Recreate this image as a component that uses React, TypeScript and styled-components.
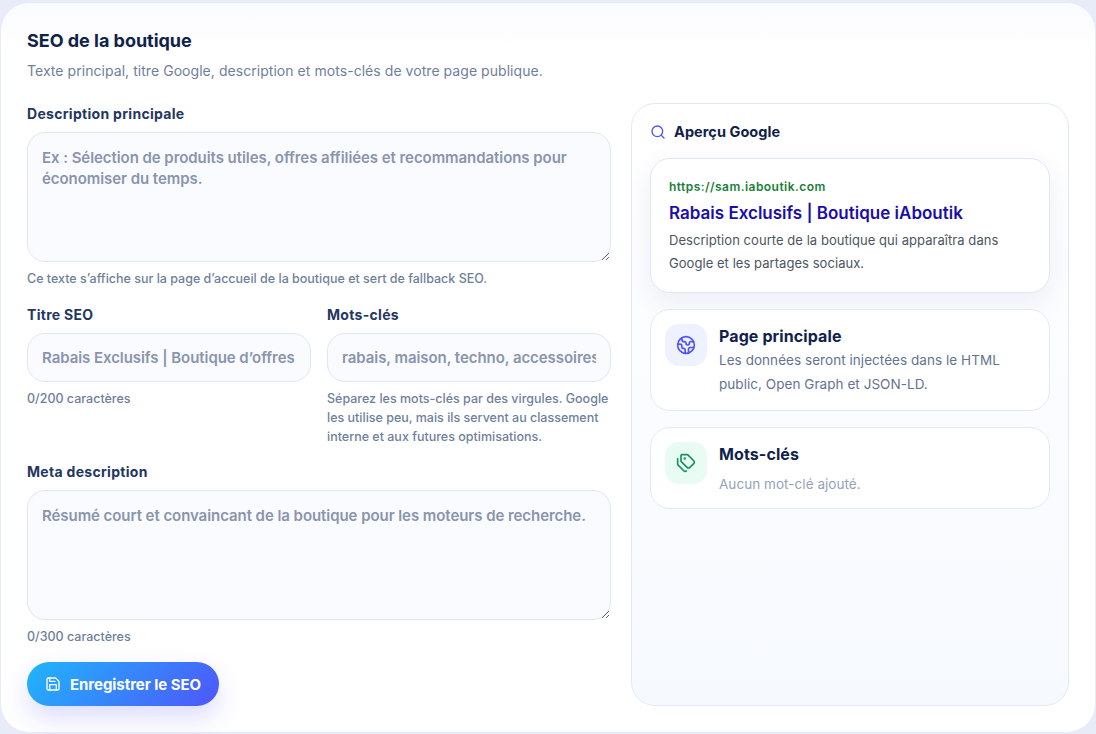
import React from "react";
import styled, { createGlobalStyle } from "styled-components";
import { Earth, Save, Search, Tags } from "lucide-react";

const GlobalStyle = createGlobalStyle`
  * { box-sizing: border-box; }
  html, body { margin: 0; height: 100%; }
  body {
    background: #e8ebf8;
    font-family: Inter, "Noto Sans", "Liberation Sans", sans-serif;
    color: #10224a;
    overflow: hidden;
  }
`;

const Page = styled.div`
  width: 1096px;
  height: 734px;
  padding: 2px 1px;
`;

const Card = styled.section`
  height: 730px;
  padding: 24px 26px 26px;
  background: linear-gradient(180deg, #fafbfe 0, #ffffff 50px);
  border-radius: 28px;
  border-top: 1px solid #e3e9f6;
`;

const Title = styled.h2`
  margin: 0;
  font-size: 18px;
  line-height: 28px;
  font-weight: 700;
  letter-spacing: -0.02px;
  color: #10224a;
`;

const Subtitle = styled.p`
  margin: 6px 0 0;
  font-size: 14px;
  line-height: 20px;
  letter-spacing: 0.05px;
  color: #6f7f9b;
`;

const Columns = styled.div`
  display: grid;
  grid-template-columns: 4fr 3fr;
  gap: 20px;
  margin-top: 22px;
`;

const FormColumn = styled.div`
  display: flex;
  flex-direction: column;
`;

const Field = styled.div`
  display: flex;
  flex-direction: column;
  min-width: 0;
`;

const FieldRow = styled.div`
  display: grid;
  grid-template-columns: 1fr 1fr;
  gap: 16px;
  margin: 16px 0 15px;
`;

const Label = styled.label`
  font-size: 14px;
  line-height: 22px;
  font-weight: 700;
  letter-spacing: 0.3px;
  color: #24375f;
  margin-bottom: 7px;
`;

const controlStyles = `
  width: 100%;
  font-family: inherit;
  font-size: 15px;
  font-weight: 600;
  letter-spacing: -0.06px;
  color: #10224a;
  background: #f9fbff;
  border: 1px solid #dde6f5;
  border-radius: 18px;
  outline: none;
  padding: 14px;
  &::placeholder { color: #8a94ac; opacity: 1; }
`;

const TextArea = styled.textarea`
  ${controlStyles}
  display: block;
  height: 130px;
  line-height: 21px;
  resize: vertical;
`;

const Input = styled.input`
  ${controlStyles}
  display: block;
  height: 49px;
`;

const Hint = styled.small`
  margin-top: 7px;
  font-size: 12.5px;
  line-height: 19px;
  font-weight: 500;
  color: #6f7f9b;
`;

const SaveButton = styled.button`
  align-self: flex-start;
  display: flex;
  align-items: center;
  gap: 9px;
  height: 44px;
  margin-top: 16px;
  padding: 0 18px;
  border: 0;
  border-radius: 22px;
  font-family: inherit;
  font-size: 15px;
  font-weight: 700;
  letter-spacing: -0.05px;
  color: #ffffff;
  background: linear-gradient(135deg, #1fb6fb 0%, #4f55fa 100%);
  box-shadow: 0 12px 26px rgba(79, 85, 250, 0.2);
`;

const Preview = styled.aside`
  display: flex;
  flex-direction: column;
  gap: 16px;
  padding: 18px;
  background: linear-gradient(180deg, #ffffff 0%, #f6f9fe 100%);
  border: 1px solid #e2e9f6;
  border-radius: 24px;
`;

const PreviewHeading = styled.div`
  display: flex;
  align-items: center;
  gap: 8px;
  height: 20px;
  padding-bottom: 1px;
  font-size: 14.5px;
  font-weight: 700;
  letter-spacing: 0.05px;
  color: #10224a;
  svg { color: #4f55fa; }
`;

const GoogleCard = styled.div`
  padding: 18px 18px 17px;
  background: #ffffff;
  border: 1px solid #dfe7f6;
  border-radius: 20px;
  box-shadow: 0 10px 26px rgba(40, 70, 130, 0.08);
`;

const GoogleUrl = styled.div`
  font-size: 12px;
  line-height: 20px;
  font-weight: 600;
  letter-spacing: 0.45px;
  color: #188038;
`;

const GoogleTitle = styled.div`
  margin-top: 4px;
  font-size: 17px;
  line-height: 24px;
  font-weight: 600;
  color: #1a0dab;
`;

const GoogleText = styled.p`
  margin: 4px 0 0;
  font-size: 13px;
  line-height: 23px;
  letter-spacing: 0.05px;
  color: #4d5561;
`;

const InfoCard = styled.div`
  display: flex;
  gap: 12px;
  padding: 14px;
  background: #ffffff;
  border: 1px solid #e2e9f6;
  border-radius: 20px;
`;

const IconBox = styled.div<{ $tone: "violet" | "green" }>`
  flex: none;
  display: flex;
  align-items: center;
  justify-content: center;
  width: 42px;
  height: 42px;
  border-radius: 14px;
  background: ${p => (p.$tone === "violet" ? "#eef1ff" : "#e9fcf4")};
  color: ${p => (p.$tone === "violet" ? "#4f55fa" : "#17935f")};
`;

const InfoTitle = styled.div`
  font-size: 16px;
  line-height: 24px;
  font-weight: 700;
  letter-spacing: 0.1px;
  color: #10224a;
`;

const InfoText = styled.p`
  margin: 0;
  font-size: 13.5px;
  line-height: 24px;
  letter-spacing: 0.05px;
  color: #64748f;
`;

const EmptyText = styled.p`
  margin: 8px 0 0;
  font-size: 13.5px;
  line-height: 20px;
  letter-spacing: 0.05px;
  color: #94a3bb;
`;

export default function App() {
  return (
    <>
      <GlobalStyle />
      <Page>
        <Card>
          <Title>SEO de la boutique</Title>
          <Subtitle>Texte principal, titre Google, description et mots-clés de votre page publique.</Subtitle>
          <Columns>
            <FormColumn>
              <Field>
                <Label>Description principale</Label>
                <TextArea placeholder="Ex : Sélection de produits utiles, offres affiliées et recommandations pour économiser du temps." />
                <Hint>Ce texte s’affiche sur la page d’accueil de la boutique et sert de fallback SEO.</Hint>
              </Field>
              <FieldRow>
                <Field>
                  <Label>Titre SEO</Label>
                  <Input placeholder="Rabais Exclusifs | Boutique d’offres" />
                  <Hint>0/200 caractères</Hint>
                </Field>
                <Field>
                  <Label>Mots-clés</Label>
                  <Input placeholder="rabais, maison, techno, accessoires" />
                  <Hint>Séparez les mots-clés par des virgules. Google les utilise peu, mais ils servent au classement interne et aux futures optimisations.</Hint>
                </Field>
              </FieldRow>
              <Field>
                <Label>Meta description</Label>
                <TextArea placeholder="Résumé court et convaincant de la boutique pour les moteurs de recherche." />
                <Hint>0/300 caractères</Hint>
              </Field>
              <SaveButton>
                <Save size={16} strokeWidth={2} />
                Enregistrer le SEO
              </SaveButton>
            </FormColumn>
            <Preview>
              <PreviewHeading>
                <Search size={16} strokeWidth={2} />
                Aperçu Google
              </PreviewHeading>
              <GoogleCard>
                <GoogleUrl>https://sam.iaboutik.com</GoogleUrl>
                <GoogleTitle>Rabais Exclusifs | Boutique iAboutik</GoogleTitle>
                <GoogleText>Description courte de la boutique qui apparaîtra dans Google et les partages sociaux.</GoogleText>
              </GoogleCard>
              <InfoCard>
                <IconBox $tone="violet">
                  <Earth size={20} strokeWidth={2} />
                </IconBox>
                <div>
                  <InfoTitle>Page principale</InfoTitle>
                  <InfoText>Les données seront injectées dans le HTML public, Open Graph et JSON-LD.</InfoText>
                </div>
              </InfoCard>
              <InfoCard>
                <IconBox $tone="green">
                  <Tags size={20} strokeWidth={2} />
                </IconBox>
                <div>
                  <InfoTitle>Mots-clés</InfoTitle>
                  <EmptyText>Aucun mot-clé ajouté.</EmptyText>
                </div>
              </InfoCard>
            </Preview>
          </Columns>
        </Card>
      </Page>
    </>
  );
}
